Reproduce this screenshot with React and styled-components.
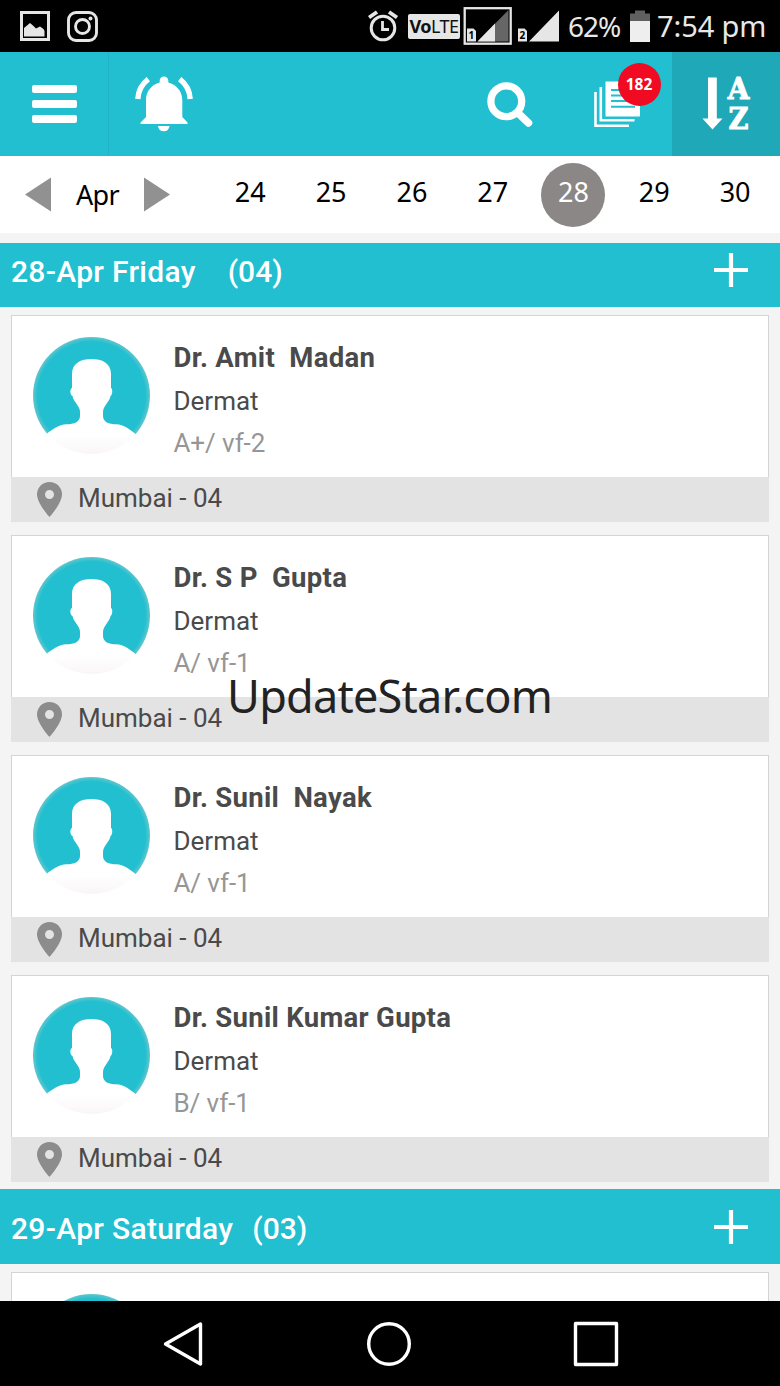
import styled, { createGlobalStyle } from "styled-components";

const visits = [
    { name: "Dr. Amit  Madan", speciality: "Dermat", grade: "A+/ vf-2", place: "Mumbai - 04" },
    { name: "Dr. S P  Gupta", speciality: "Dermat", grade: "A/ vf-1", place: "Mumbai - 04" },
    { name: "Dr. Sunil  Nayak", speciality: "Dermat", grade: "A/ vf-1", place: "Mumbai - 04" },
    { name: "Dr. Sunil Kumar Gupta", speciality: "Dermat", grade: "B/ vf-1", place: "Mumbai - 04" },
];

const days = [24, 25, 26, 27, 28, 29, 30];

function StatusBar() {
    return (
        <Status>
            <StatusIcon width="30" height="30" viewBox="0 0 30 30">
                <rect x="1.5" y="1.5" width="27" height="27" fill="none" stroke="#e6e6e6" strokeWidth="3"/>
                <path d="M4 25.500V17L7 14.500 10 12 13.500 15 16 17.500 20 15.500 23.500 18 24.500 20V25.500Z" fill="#e6e6e6"/>
            </StatusIcon>
            <StatusIcon $left={17} width="31" height="31" viewBox="0 0 31 31" fill="none" stroke="#e6e6e6" strokeWidth="2.900">
                <rect x="1.500" y="1.500" width="28" height="28" rx="7.500"/>
                <circle cx="15.500" cy="15.500" r="7"/>
                <circle cx="23.500" cy="7.500" r="2" fill="#e6e6e6" stroke="none"/>
            </StatusIcon>
            <Spacer/>
            <StatusIcon width="31" height="32" viewBox="0 0 31 32" fill="none" stroke="#e6e6e6">
                <circle cx="15" cy="18" r="11.800" strokeWidth="3"/>
                <path d="M14.500 11V19.500H21" strokeWidth="2.800"/>
                <path d="M1 7.500 9 2M29 7.500 21 2" strokeWidth="3.800"/>
            </StatusIcon>
            <Volte><b>Vo</b>LTE</Volte>
            <StatusIcon $left={3} width="49" height="38" viewBox="0 0 49 38">
                <rect x="1.700" y="1.200" width="46" height="35.500" fill="none" stroke="#e6e6e6" strokeWidth="2.300"/>
                <path d="M14.500 34.500 45.500 3V34.500Z" fill="#666"/>
                <path d="M14.500 34.500 32 16.500V34.500Z" fill="#e6e6e6"/>
                <path d="M4 21.500H10.500L13 24V34.500H4Z" fill="#e6e6e6"/>
                <text x="8.300" y="32" fontSize="10" fontWeight="700" textAnchor="middle" fill="#000">1</text>
            </StatusIcon>
            <StatusIcon $left={6} width="41" height="38" viewBox="0 0 41 38">
                <path d="M11 34.500 41 3.500V34.500Z" fill="#e6e6e6"/>
                <path d="M0 21.500H6.500L9 24V34.500H0Z" fill="#e6e6e6"/>
                <text x="4.400" y="32" fontSize="10" fontWeight="700" textAnchor="middle" fill="#000">2</text>
            </StatusIcon>
            <StatusText $left={9} $width={62} $spacing={-1}>62%</StatusText>
            <StatusIcon width="20" height="32" viewBox="0 0 20 32">
                <path d="M0 11V3.500H5V0.500H15V3.500H20V11Z" fill="#606060"/>
                <path d="M0 11H20V32H0Z" fill="#eee"/>
            </StatusIcon>
            <StatusText $left={7} $width={123} $size={29} $spacing={-0.1}>7:54 pm</StatusText>
        </Status>
    )
}

function Toolbar() {
    return (
        <Bar>
            <MenuButton aria-label="Menu"><MenuSpan/><MenuSpan/><MenuSpan/></MenuButton>
            <ToolButton $width={109} aria-label="Alerts">
                <svg width="60" height="57" viewBox="0 0 60 57">
                    <path d="M30 0.500C32.500 0.500 34.300 2.300 34.300 4.500V6.500C42 8.500 48.300 15 48.300 24V41L53.500 46.500V48H6.500V46.500L12 41V24C12 15 18 8.500 25.700 6.500V4.500C25.700 2.300 27.500 0.500 30 0.500Z" fill="#fff"/>
                    <path d="M24 50H35.500A5.800 6 0 0 1 24 50Z" fill="#fff"/>
                    <path d="M3.800 23C4.300 14.500 8 8 14.300 3.200M56.200 23C55.700 14.500 52 8 45.700 3.200" fill="none" stroke="#fff" strokeWidth="5.400"/>
                </svg>
            </ToolButton>
            <Spacer/>
            <ToolButton $width={84} aria-label="Search">
                <svg width="46" height="46" viewBox="0 0 46 46" fill="none" stroke="#fff" strokeWidth="7.300">
                    <circle cx="19.300" cy="20.200" r="15.400"/>
                    <path d="M31 32 41.500 42" strokeWidth="7.500" strokeLinecap="round"/>
                </svg>
            </ToolButton>
            <ToolButton $width={120} aria-label="Reports">
                <Reports>
                    <svg width="47" height="47" viewBox="0 0 47 47">
                        <path d="M1.500 11V44.700H35M6.800 6V39.300H40.500" fill="none" stroke="#fff" strokeWidth="2.600"/>
                        <path d="M11.500 0.500H46V35.500H11.500Z" fill="#fff"/>
                        <path d="M17 9H41M17 14.500H41M17 20H41M17 25.800H41" stroke="#21bfd0" strokeWidth="2"/>
                    </svg>
                    <Badge>182</Badge>
                </Reports>
            </ToolButton>
            <ToolButton $width={108} $active aria-label="Sort">
                <SortIcon width="50" height="58" viewBox="0 0 50 58">
                    <path d="M7 2.500H15.800V43.500H21.500L11.500 54.500 1.500 43.500H7Z" fill="#fff"/>
                    <SortLetter x="37.500" y="24" textLength="21.500" lengthAdjust="spacingAndGlyphs">A</SortLetter>
                    <SortLetter x="37.500" y="54" textLength="20" lengthAdjust="spacingAndGlyphs">Z</SortLetter>
                </SortIcon>
            </ToolButton>
        </Bar>
    )
}

function DateStrip() {
    return (
        <Dates>
            <MonthPicker>
                <svg width="26" height="35" viewBox="0 0 26 35"><path d="M0 17.500 26 0.500V34.500Z" fill="#919191"/></svg>
                <Month>Apr</Month>
                <svg width="26" height="35" viewBox="0 0 26 35"><path d="M26 17.500 0 0.500V34.500Z" fill="#919191"/></svg>
            </MonthPicker>
            <Days>
                {days.map(day => <Day key={day} $selected={day === 28}><span>{day}</span></Day>)}
            </Days>
        </Dates>
    )
}

function DayHeader({ title, count, gap, height, bottom }) {
    return (
        <DayBar $height={height} $bottom={bottom}>
            <DayTitle>{title}</DayTitle>
            <DayCount $gap={gap}>{count}</DayCount>
            <Spacer/>
            <svg width="34" height="34" viewBox="0 0 34 34"><path d="M17 0V34M0 17H34" stroke="#fff" strokeWidth="4.200"/></svg>
        </DayBar>
    )
}

function Avatar() {
    return (
        <svg width="118" height="118" viewBox="0 0 118 118">
            <defs>
                <clipPath id="avatar"><circle cx="59.500" cy="59.500" r="58.500"/></clipPath>
                <radialGradient id="rim" gradientUnits="userSpaceOnUse" cx="59.500" cy="59.500" r="58.500">
                    <stop offset="0.920" stopColor="#21bfd0"/>
                    <stop offset="1" stopColor="#62c6cd"/>
                </radialGradient>
                <linearGradient id="torso" x1="0" y1="0" x2="0" y2="1">
                    <stop offset="0.800" stopColor="#fff"/>
                    <stop offset="1" stopColor="#f9f6f8"/>
                </linearGradient>
            </defs>
            <g clipPath="url(#avatar)">
                <path d="M0 0H118V98H0Z" fill="url(#rim)"/>
                <path d="M59.500 23C70 23 79 27 79 38V52C81 53 80.500 59 78.500 60C77.500 66 71 70 71 76V80C71 86 77 88.300 84 88.300C92 88.300 98 94 103 97.500V118H15V97.500C20 94 27 88.300 34.500 88.300C42 88.300 48 86 48 80V76C48 70 41.500 66 40.500 60C38 59 37.500 53 40 52V38C40 27 49 23 59.500 23Z" fill="url(#torso)"/>
            </g>
        </svg>
    )
}

function VisitCard({ visit }) {
    return (
        <Card>
            <CardBody>
                <Avatar/>
                <Details>
                    <Name>{visit.name}</Name>
                    <Speciality>{visit.speciality}</Speciality>
                    <Grade>{visit.grade}</Grade>
                </Details>
            </CardBody>
            <CardFooter>
                <svg width="25" height="35" viewBox="0 0 25 35">
                    <path d="M12.500 0C5.500 0 0 5.500 0 12.300C0 21.500 12.500 35 12.500 35S25 21.500 25 12.300C25 5.500 19.500 0 12.500 0ZM12.500 8A4.500 4.500 0 1 1 12.500 17A4.500 4.500 0 1 1 12.500 8Z" fill="#8c8c8c" fillRule="evenodd"/>
                </svg>
                <Place>{visit.place}</Place>
            </CardFooter>
        </Card>
    )
}

export default function App() {
    return (
        <Screen>
            <GlobalStyle/>
            <StatusBar/>
            <Toolbar/>
            <DateStrip/>
            <Schedule>
                <DayHeader title="28-Apr Friday" count="(04)" gap={32} height={64} bottom={11}/>
                <CardList>
                    {visits.map(visit => <VisitCard key={visit.name} visit={visit}/>)}
                </CardList>
                <DayHeader title="29-Apr Saturday" count="(03)" gap={19} height={75} bottom={0}/>
                <CardList>
                    <VisitCard visit={{ name: "", speciality: "", grade: "", place: "" }}/>
                </CardList>
            </Schedule>
            <NavBar>
                <svg width="40" height="46" viewBox="0 0 40 46"><path d="M2.500 23 37.500 3V43Z"/></svg>
                <svg width="46" height="46" viewBox="0 0 46 46"><circle cx="24" cy="23" r="20.300"/></svg>
                <svg width="46" height="46" viewBox="0 0 46 46"><rect x="2.500" y="2.500" width="41" height="41"/></svg>
            </NavBar>
            <Watermark>UpdateStar.com</Watermark>
        </Screen>
    )
}

const GlobalStyle = createGlobalStyle`
    * {
        box-sizing: border-box;
    }

    body {
        margin: 0;
        background: #f4f4f4;
        font-family: Roboto, sans-serif;
    }

    svg {
        display: block;
        flex-shrink: 0;
    }
`

const Screen = styled.div`
    position: relative;
    display: flex;
    flex-direction: column;
    width: 780px;
    height: 1386px;
    overflow: hidden;
    background: #f4f4f4;
`

const Spacer = styled.div`
    flex-grow: 1;
`

const Status = styled.div`
    display: flex;
    align-items: center;
    flex-shrink: 0;
    height: 52px;
    padding-left: 20px;
    background: #000;
`

const StatusIcon = styled.svg`
    margin-left: ${({ $left }) => $left || 0}px;
    font-family: "Noto Sans", sans-serif;
`

const Volte = styled.div`
    width: 52px;
    height: 25px;
    margin-left: 9px;
    border-radius: 2px;
    background: #e6e6e6;
    color: #111;
    font: 400 18px/25px "Noto Sans", sans-serif;
    letter-spacing: -0.500px;
    text-align: center;
    white-space: nowrap;
`

const StatusText = styled.div`
    flex-shrink: 0;
    width: ${({ $width }) => $width}px;
    margin-left: ${({ $left }) => $left}px;
    color: #e8e8e8;
    font: 400 ${({ $size }) => $size || 28}px/52px "Noto Sans", sans-serif;
    letter-spacing: ${({ $spacing }) => $spacing}px;
    white-space: nowrap;
`

const Bar = styled.header`
    display: flex;
    flex-shrink: 0;
    height: 104px;
    background: #21bfd0;
`

const ToolButton = styled.button`
    display: flex;
    align-items: center;
    justify-content: center;
    width: ${({ $width }) => $width}px;
    padding: 0;
    border: none;
    background: ${({ $active }) => $active ? "#1fa8b8" : "none"};
`

const MenuButton = styled(ToolButton)`
    flex-direction: column;
    gap: 7px;
    width: 109px;
    padding-bottom: 1px;
    border-right: 1px solid #20b4c5;
`

const MenuSpan = styled.span`
    display: block;
    width: 45px;
    height: 8px;
    background: #fff;
    border-radius: 2px;
`

const Reports = styled.div`
    position: relative;
    margin-left: 10px;
`

const Badge = styled.span`
    position: absolute;
    top: -18px;
    left: 24px;
    width: 43px;
    height: 43px;
    border-radius: 50%;
    background: #f00a22;
    color: #fff;
    font: 700 15.500px/43px "Noto Sans", sans-serif;
    text-align: center;
`

const SortIcon = styled.svg`
    overflow: visible;
`

const SortLetter = styled.text`
    fill: #fff;
    stroke: #fff;
    stroke-width: 1px;
    font: 700 29px "DejaVu Serif", serif;
    text-anchor: middle;
`

const Dates = styled.div`
    display: flex;
    flex-shrink: 0;
    height: 77px;
    background: #fff;
    color: #000;
    font: 400 27px/36px "Noto Sans", sans-serif;
`

const MonthPicker = styled.div`
    display: flex;
    align-items: center;
    justify-content: space-between;
    flex-shrink: 0;
    width: 145px;
    margin-left: 25px;
`

const Month = styled.span`
    letter-spacing: -0.600px;
`

const Days = styled.div`
    display: flex;
    align-items: center;
    margin-left: 48.300px;
`

const Day = styled.div`
    display: flex;
    flex-shrink: 0;
    justify-content: center;
    width: 64px;
    height: 64px;
    margin-right: 16.800px;
    border-radius: 50%;
    background: ${({ $selected }) => $selected ? "#8b8786" : "none"};
    color: ${({ $selected }) => $selected ? "#fff" : "#000"};
    line-height: 58px;
`

const Schedule = styled.main`
    flex: 1;
    min-height: 0;
    padding-top: 10px;
    overflow: hidden;
`

const DayBar = styled.div`
    display: flex;
    align-items: center;
    height: ${({ $height }) => $height}px;
    padding: 0 32px ${({ $bottom }) => $bottom}px 11px;
    background: #21bfd0;
    color: #fff;
    font-size: 30px;
    font-weight: 500;
    line-height: 36px;
`

const DayTitle = styled.h2`
    margin: 4px 0 0;
    font: inherit;
    letter-spacing: 0.300px;
`

const DayCount = styled.span`
    margin: 4px 0 0 ${({ $gap }) => $gap}px;
`

const CardList = styled.div`
    display: flex;
    flex-direction: column;
    gap: 13px;
    padding: 8px 11px 7px;
`

const Card = styled.article`
    height: 207px;
    background: #fff;
`

const CardBody = styled.div`
    display: flex;
    height: 162px;
    padding: 20px 20px 0;
    border: solid #d4d4d4;
    border-width: 1px 1px 0;
`

const Details = styled.div`
    display: flex;
    flex-direction: column;
    margin-left: 23.500px;
    padding-top: 1px;
    line-height: 42px;
    white-space: pre;
`

const Name = styled.h3`
    margin: 0;
    color: #4a4a4a;
    font-size: 27.500px;
    font-weight: 700;
    letter-spacing: 0.300px;
`

const Speciality = styled.div`
    padding-top: 0.500px;
    color: #4a4a4a;
    font-size: 26px;
`

const Grade = styled.div`
    color: #969696;
    font-size: 26px;
    letter-spacing: -0.100px;
`

const CardFooter = styled.div`
    display: flex;
    align-items: center;
    height: 45px;
    padding-left: 26px;
    background: #e3e3e3;
`

const Place = styled.span`
    margin: 0 0 3px 16px;
    color: #4a4a4a;
    font-size: 26px;
`

const NavBar = styled.nav`
    display: flex;
    align-items: center;
    justify-content: space-between;
    flex-shrink: 0;
    height: 85px;
    padding: 0 161px 0 163px;
    background: #000;
    fill: none;
    stroke: #fff;
    stroke-width: 3.400px;
    stroke-linejoin: round;
`

const Watermark = styled.div`
    position: absolute;
    top: 664px;
    left: 227px;
    color: #222;
    font: 400 45px/64px "Noto Sans", sans-serif;
    letter-spacing: -0.750px;
    white-space: nowrap;
`
